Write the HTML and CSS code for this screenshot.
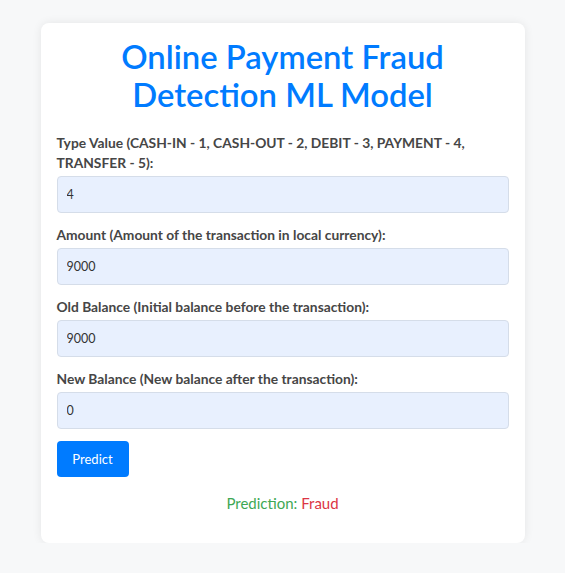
FILE: index.html
```html
<!DOCTYPE html>
<html lang="en">
<head>
<meta charset="utf-8">
<title>Online Payment Fraud Detection ML Model</title>
<link rel="stylesheet" href="styles.css">
</head>
<body>
<div class="card">
  <h2 class="title">Online Payment Fraud Detection ML Model</h2>
  <form class="form">
    <div class="group">
      <label class="label" for="type">Type Value (CASH-IN - 1, CASH-OUT - 2, DEBIT - 3, PAYMENT - 4, TRANSFER - 5):</label>
      <input class="input" id="type" type="text" value="4">
    </div>
    <div class="group">
      <label class="label" for="amount">Amount (Amount of the transaction in local currency):</label>
      <input class="input" id="amount" type="text" value="9000">
    </div>
    <div class="group">
      <label class="label" for="old">Old Balance (Initial balance before the transaction):</label>
      <input class="input" id="old" type="text" value="9000">
    </div>
    <div class="group">
      <label class="label" for="new">New Balance (New balance after the transaction):</label>
      <input class="input" id="new" type="text" value="0">
    </div>
    <button class="btn" type="button">Predict</button>
  </form>
  <p class="result"><span class="result-label">Prediction:</span> <span class="result-value">Fraud</span></p>
</div>
</body>
</html>
```
FILE: styles.css
```css
* { box-sizing: border-box; }
html, body { margin: 0; padding: 0; }
body {
  background: #f7f8f9;
  font-family: "Lato", "Noto Sans", sans-serif;
  color: #444;
  padding-top: 23px;
}
.card {
  width: 484px;
  margin: 0 auto;
  background: #fff;
  border-radius: 8px;
  box-shadow: 0 0 10px rgba(0, 0, 0, 0.08);
  padding: 15px 16px 29px;
  height: 520px;
}
.title {
  margin: 0 0 19px;
  text-align: center;
  color: #007bff;
  font-size: 32.8px;
  font-weight: 600;
  line-height: 38px;
}
.form { margin: 0; }
.group { margin-bottom: 12px; }
.label {
  display: block;
  font-size: 13.8px;
  font-weight: 700;
  line-height: 20px;
  margin-bottom: 3px;
  color: #464646;
}
.input {
  display: block;
  width: 100%;
  height: 37px;
  padding: 0 9px;
  margin: 0;
  background: #e8f0fe;
  border: 1px solid #d5dde9;
  border-radius: 4px;
  font-family: inherit;
  font-size: 12.5px;
  color: #333;
  outline: none;
}
.btn {
  display: block;
  height: 36px;
  width: 72px;
  padding: 0;
  background: #007bff;
  color: #fff;
  border: none;
  border-radius: 4px;
  font-family: inherit;
  font-size: 13px;
  cursor: pointer;
}
.result {
  margin: 15px 0 0;
  text-align: center;
  font-size: 15px;
  line-height: 22px;
}
.result-label { color: #3ea854; }
.result-value { color: #dc3545; }
```
